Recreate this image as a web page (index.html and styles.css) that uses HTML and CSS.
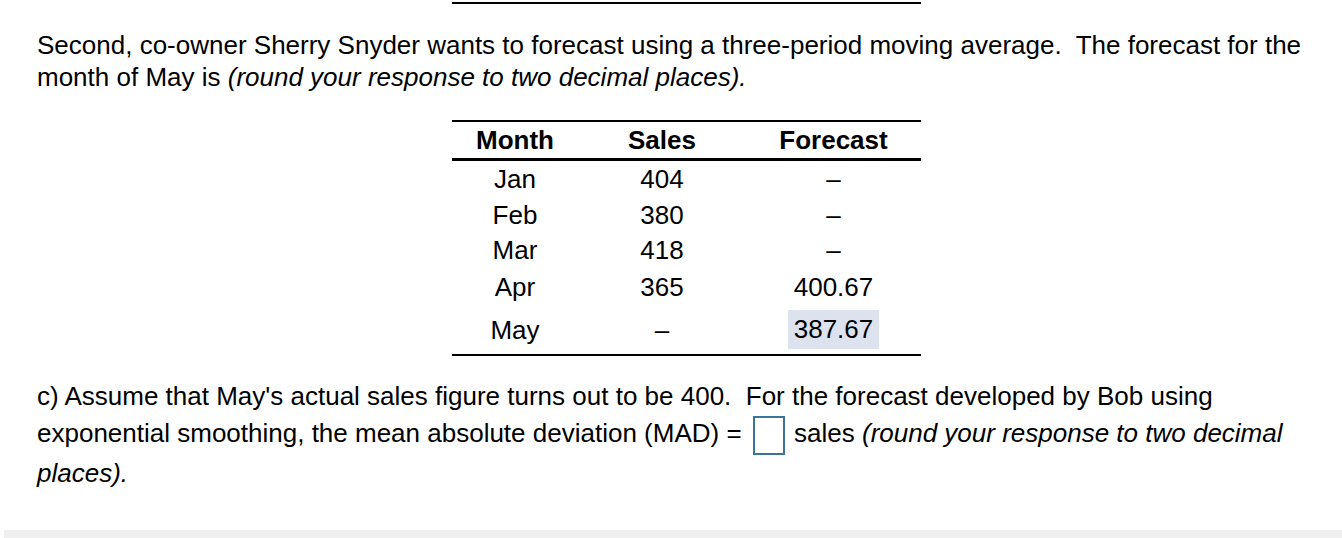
FILE: index.html
```html
<!DOCTYPE html>
<html>
<head>
<meta charset="utf-8">
<link rel="stylesheet" href="styles.css">
</head>
<body>
<div class="page">
  <div class="rule-top"></div>
  <p class="question">Second, co-owner Sherry Snyder wants to forecast using a three-period moving average.&nbsp; The forecast for the month of May is <em>(round your response to two decimal places).</em></p>
  <table class="data">
    <thead>
      <tr class="head"><th class="c1">Month</th><th class="c2">Sales</th><th class="c3">Forecast</th></tr>
    </thead>
    <tbody>
      <tr class="r1"><td>Jan</td><td>404</td><td>&ndash;</td></tr>
      <tr class="r2"><td>Feb</td><td>380</td><td>&ndash;</td></tr>
      <tr class="r3"><td>Mar</td><td>418</td><td>&ndash;</td></tr>
      <tr class="r4"><td>Apr</td><td>365</td><td>400.67</td></tr>
      <tr class="r5"><td>May</td><td>&ndash;</td><td><span class="answer">387.67</span></td></tr>
    </tbody>
  </table>
  <p class="question part-c">c) Assume that May's actual sales figure turns out to be 400.&nbsp; For the forecast developed by Bob using exponential smoothing, the mean absolute deviation (MAD) = <span class="input-box"></span> sales <em>(round your response to two decimal places).</em></p>
</div>
<div class="footer-bar"></div>
</body>
</html>
```

FILE: styles.css
```css
html, body {
  margin: 0;
  padding: 0;
  background: #ffffff;
}

body {
  font-family: "Liberation Sans", Arial, Helvetica, sans-serif;
  color: #000000;
  width: 1342px;
  height: 538px;
  overflow: hidden;
}

.page {
  padding: 0 37px;
  font-size: 26px;
}

.rule-top {
  width: 469px;
  margin-left: 415px;
  margin-top: 2px;
  border-top: 2px solid #000;
}

.question {
  margin: 25px 0 0 0;
  line-height: 32px;
  width: 1280px;
}

.question em {
  font-style: italic;
}

.data {
  margin: 27px 0 0 415px;
  width: 469px;
  border-collapse: collapse;
  border-top: 2px solid #000;
  border-bottom: 2px solid #000;
  font-size: 26px;
}

.data th {
  font-weight: bold;
  height: 36px;
  padding: 0;
  border-bottom: 3px solid #000;
  text-align: center;
  vertical-align: middle;
}

.data .c1 { width: 126px; }
.data .c2 { width: 168px; }
.data .c3 { width: 175px; }

.data td {
  padding: 0;
  text-align: center;
  vertical-align: middle;
  line-height: 26px;
}

.data .r1 td { height: 36px; }
.data .r2 td { height: 35px; }
.data .r3 td { height: 36px; }
.data .r4 td { height: 37px; }
.data .r5 td { height: 49px; }

.answer {
  display: inline-block;
  background: #dce3ee;
  padding: 6px 6px 7px;
  line-height: 26px;
}

.part-c {
  margin-top: 22px;
  line-height: 37px;
  width: 1268px;
}

.input-box {
  display: inline-block;
  box-sizing: border-box;
  width: 32px;
  height: 39px;
  border: 2px solid #3a7599;
  vertical-align: middle;
  margin: 0 2px 0 4px;
}

.footer-bar {
  margin: 38px 0 0 4px;
  height: 12px;
  background: #f0f0f0;
}
```
